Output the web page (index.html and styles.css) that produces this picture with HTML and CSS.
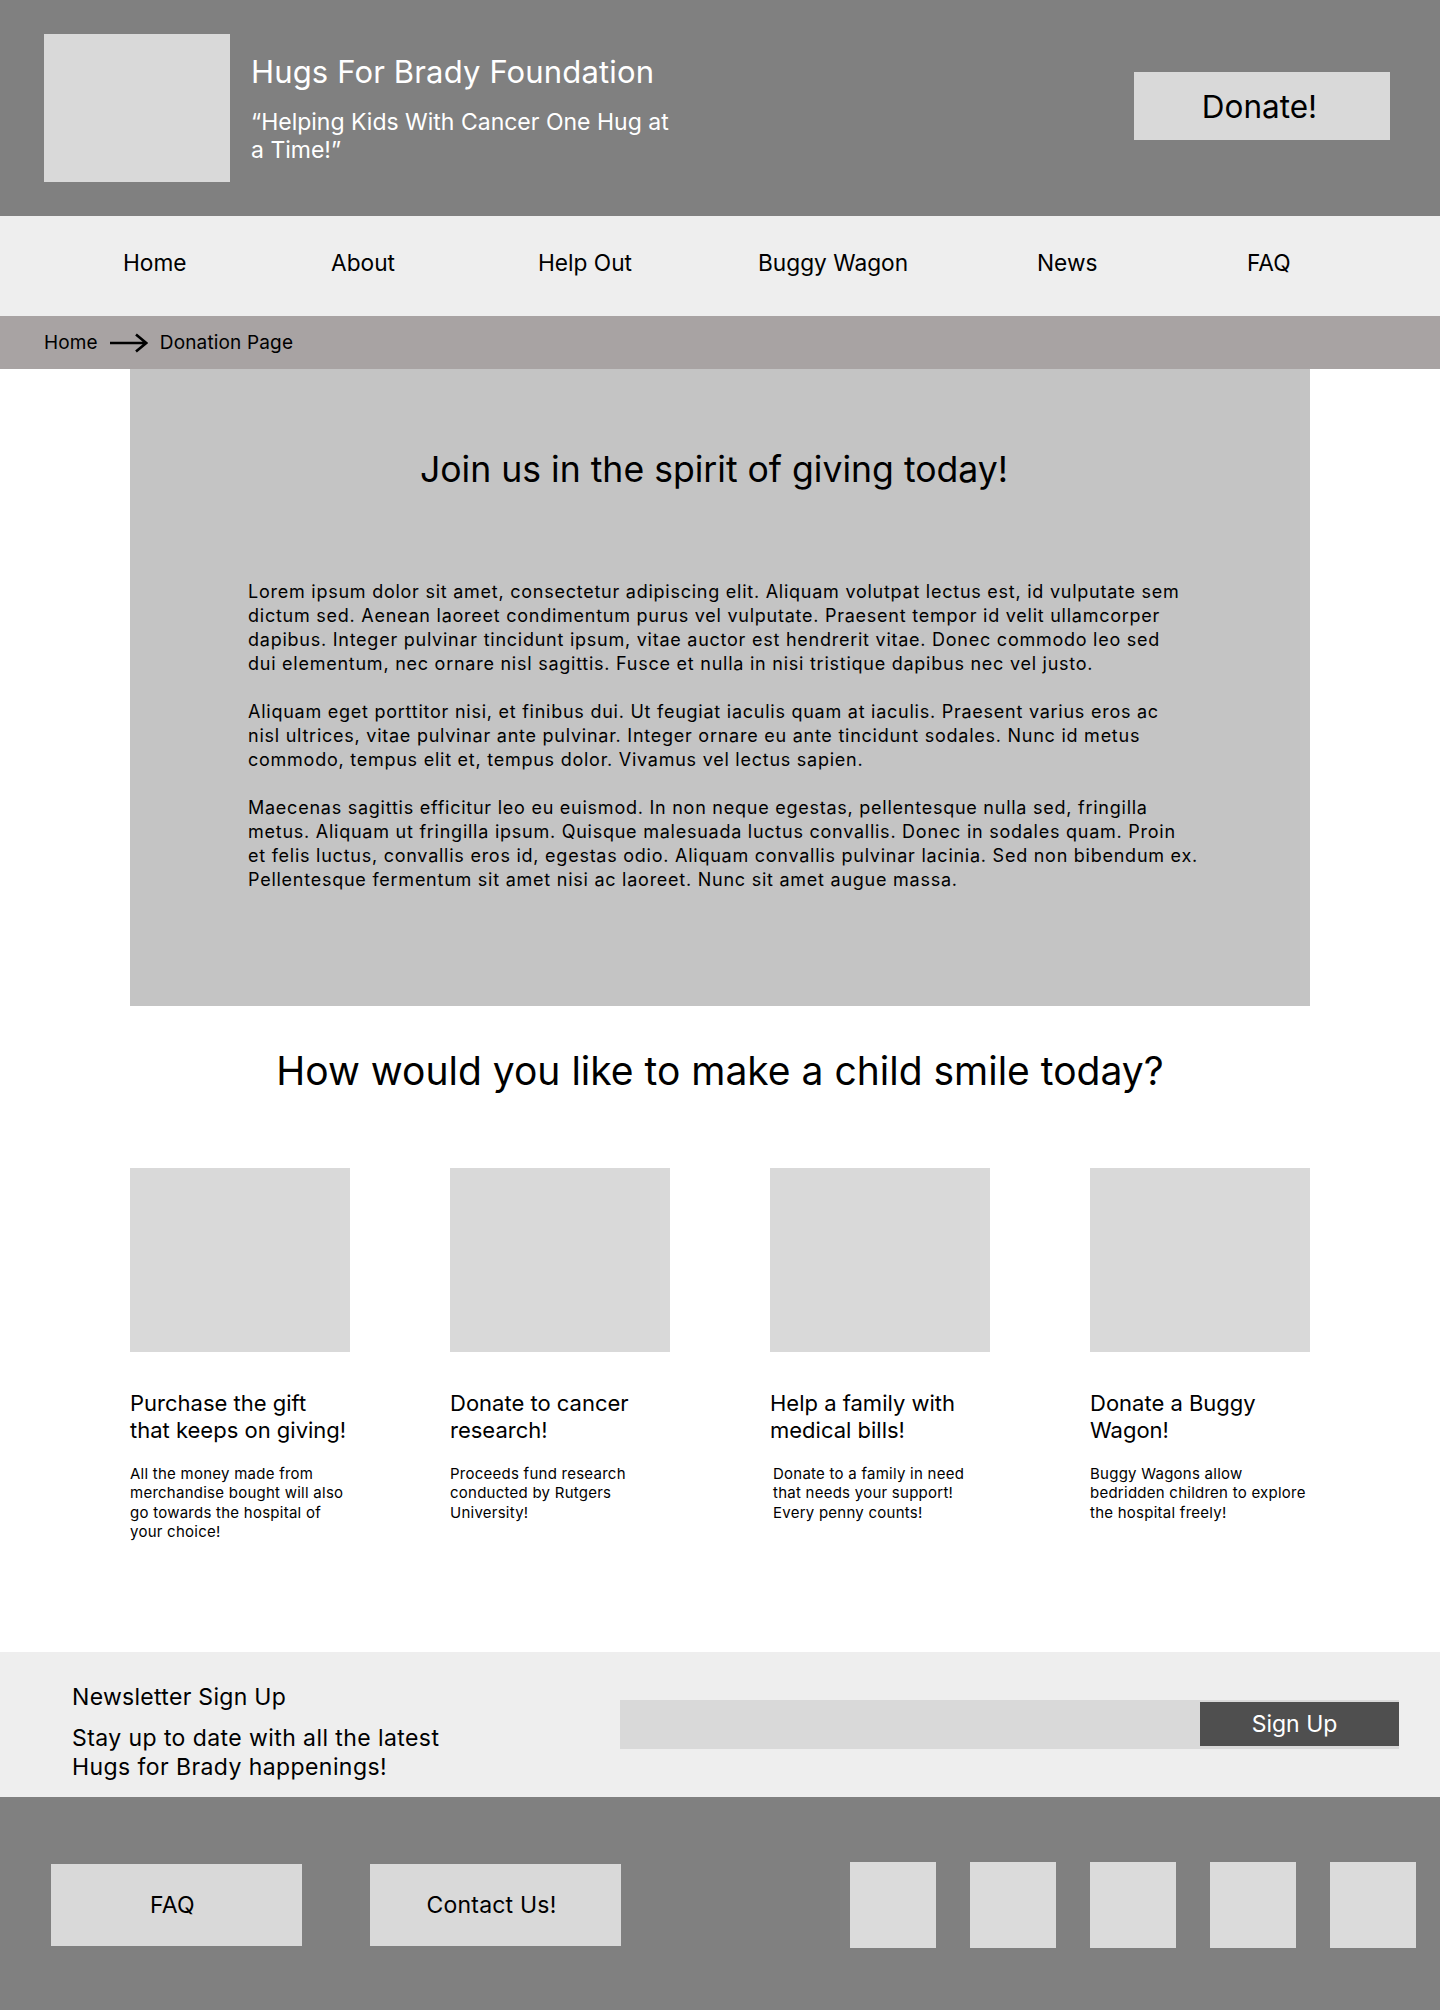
FILE: index.html
```html
<!DOCTYPE html>
<html lang="en">
<head>
<meta charset="utf-8">
<title>Hugs For Brady Foundation - Donation Page</title>
<link rel="stylesheet" href="styles.css">
</head>
<body>
<header class="site-header">
  <div class="logo"></div>
  <div class="brand">
    <h1 class="brand-title">Hugs For Brady Foundation</h1>
    <p class="brand-tagline">“Helping Kids With Cancer One Hug at a Time!”</p>
  </div>
  <a class="donate-btn" href="#">Donate!</a>
</header>

<nav class="main-nav">
  <a href="#">Home</a>
  <a href="#">About</a>
  <a href="#">Help Out</a>
  <a href="#">Buggy Wagon</a>
  <a href="#">News</a>
  <a href="#">FAQ</a>
</nav>

<div class="breadcrumb">
  <a href="#">Home</a>
  <svg class="crumb-arrow" width="38" height="20" viewBox="0 0 38 20" aria-hidden="true"><path d="M0 10H36M26 1.5L36.2 10L26 18.5" fill="none" stroke="#000" stroke-width="2.6" stroke-linejoin="miter"/></svg>
  <span>Donation Page</span>
</div>

<main>
  <section class="intro">
    <h2 class="intro-title">Join us in the spirit of giving today!</h2>
    <p>Lorem ipsum dolor sit amet, consectetur adipiscing elit. Aliquam volutpat lectus est, id vulputate sem<br>dictum sed. Aenean laoreet condimentum purus vel vulputate. Praesent tempor id velit ullamcorper<br>dapibus. Integer pulvinar tincidunt ipsum, vitae auctor est hendrerit vitae. Donec commodo leo sed<br>dui elementum, nec ornare nisl sagittis. Fusce et nulla in nisi tristique dapibus nec vel justo.</p>
    <p>Aliquam eget porttitor nisi, et finibus dui. Ut feugiat iaculis quam at iaculis. Praesent varius eros ac<br>nisl ultrices, vitae pulvinar ante pulvinar. Integer ornare eu ante tincidunt sodales. Nunc id metus<br>commodo, tempus elit et, tempus dolor. Vivamus vel lectus sapien.</p>
    <p>Maecenas sagittis efficitur leo eu euismod. In non neque egestas, pellentesque nulla sed, fringilla<br>metus. Aliquam ut fringilla ipsum. Quisque malesuada luctus convallis. Donec in sodales quam. Proin<br>et felis luctus, convallis eros id, egestas odio. Aliquam convallis pulvinar lacinia. Sed non bibendum ex.<br>Pellentesque fermentum sit amet nisi ac laoreet. Nunc sit amet augue massa.</p>
  </section>

  <section class="ways">
    <h2 class="ways-title">How would you like to make a child smile today?</h2>
    <div class="cards">
      <article class="card">
        <div class="card-img"></div>
        <h3 class="card-title">Purchase the gift<br>that keeps on giving!</h3>
        <p class="card-desc">All the money made from<br>merchandise bought will also<br>go towards the hospital of<br>your choice!</p>
      </article>
      <article class="card">
        <div class="card-img"></div>
        <h3 class="card-title">Donate to cancer<br>research!</h3>
        <p class="card-desc">Proceeds fund research<br>conducted by Rutgers<br>University!</p>
      </article>
      <article class="card">
        <div class="card-img"></div>
        <h3 class="card-title">Help a family with<br>medical bills!</h3>
        <p class="card-desc card-desc-indent">Donate to a family in need<br>that needs your support!<br>Every penny counts!</p>
      </article>
      <article class="card">
        <div class="card-img"></div>
        <h3 class="card-title">Donate a Buggy<br>Wagon!</h3>
        <p class="card-desc">Buggy Wagons allow<br>bedridden children to explore<br>the hospital freely!</p>
      </article>
    </div>
  </section>
</main>

<section class="newsletter">
  <div class="newsletter-text">
    <h2 class="newsletter-title">Newsletter Sign Up</h2>
    <p class="newsletter-sub">Stay up to date with all the latest<br>Hugs for Brady happenings!</p>
  </div>
  <form class="signup" onsubmit="return false">
    <button class="signup-btn" type="submit">Sign Up</button>
  </form>
</section>

<footer class="site-footer">
  <a class="footer-link" href="#">FAQ</a>
  <a class="footer-link" href="#">Contact Us!</a>
  <div class="socials">
    <span class="social"></span>
    <span class="social"></span>
    <span class="social"></span>
    <span class="social"></span>
    <span class="social"></span>
  </div>
</footer>
</body>
</html>
```
FILE: styles.css
```css
* { box-sizing: border-box; }

body {
  margin: 0;
  font-family: Inter, "Noto Sans", sans-serif;
  color: #000;
  background: #fff;
}

a { color: inherit; text-decoration: none; }

/* Header */
.site-header {
  height: 216px;
  background: #808080;
  display: flex;
  align-items: flex-start;
  padding: 34px 50px 0 44px;
}
.logo {
  width: 186px;
  height: 148px;
  background: #d9d9d9;
  flex: none;
}
.brand {
  margin: 19px 0 0 21px;
  color: #fff;
  width: 425px;
}
.brand-title {
  margin: 0;
  font-size: 31px;
  line-height: 38px;
  font-weight: 400;
  letter-spacing: 0.15px;
}
.brand-tagline {
  margin: 17px 0 0;
  font-size: 23px;
  line-height: 28px;
  letter-spacing: 0;
}
.donate-btn {
  margin: 38px 0 0 auto;
  width: 256px;
  height: 68px;
  background: #d9d9d9;
  display: flex;
  align-items: center;
  justify-content: center;
  padding-right: 5px;
  font-size: 31.5px;
}

/* Navigation */
.main-nav {
  height: 100px;
  background: #eeeeee;
  display: grid;
  grid-template-columns: 208px 207px 220px 279px 210px auto;
  align-items: center;
  padding: 0 0 8px 123px;
  font-size: 22.7px;
}

/* Breadcrumb */
.breadcrumb {
  height: 53px;
  background: #a8a3a3;
  display: flex;
  align-items: center;
  gap: 12px;
  padding-left: 44px;
  font-size: 19px;
  letter-spacing: 0.15px;
}
.crumb-arrow { display: block; }

/* Intro */
.intro {
  width: 1180px;
  margin: 0 auto;
  background: #c4c4c4;
  padding: 81px 100px 114px 118px;
}
.intro-title {
  margin: 0 30px 90px 0;
  font-size: 35.6px;
  line-height: 40px;
  font-weight: 400;
  text-align: center;
}
.intro p {
  margin: 0 0 24px;
  font-size: 18px;
  line-height: 24px;
  letter-spacing: 0.75px;
}
.intro p:last-child { margin-bottom: 0; }

/* Ways to give */
.ways {
  width: 1180px;
  margin: 0 auto;
  padding: 41px 0 111px;
}
.ways-title {
  margin: 0 0 73px;
  font-size: 39px;
  line-height: 48px;
  font-weight: 400;
  text-align: center;
}
.cards {
  display: grid;
  grid-template-columns: repeat(4, 220px);
  justify-content: space-between;
}
.card-img {
  height: 184px;
  background: #d9d9d9;
}
.card-title {
  margin: 38px 0 0;
  font-size: 22px;
  line-height: 27px;
  font-weight: 400;
}
.card-desc {
  margin: 20px 0 0;
  font-size: 15px;
  line-height: 19.3px;
  letter-spacing: 0.25px;
  white-space: nowrap;
}
.card-desc-indent { padding-left: 3px; }

/* Newsletter */
.newsletter {
  height: 145px;
  background: #eeeeee;
  display: flex;
  justify-content: space-between;
  align-items: flex-start;
  padding: 0 41px 0 72px;
}
.newsletter-text { padding-top: 31px; }
.newsletter-title {
  margin: 0;
  font-size: 23px;
  line-height: 28px;
  font-weight: 400;
  letter-spacing: 0.3px;
}
.newsletter-sub {
  margin: 13px 0 0;
  font-size: 23px;
  line-height: 29px;
  letter-spacing: 0.42px;
}
.signup {
  margin: 48px 0 0;
  width: 779px;
  height: 49px;
  background: #d9d9d9;
  display: flex;
  justify-content: flex-end;
  align-items: center;
}
.signup-btn {
  width: 199px;
  height: 44px;
  border: 0;
  padding: 0 10px 0 0;
  background: #4f4f4f;
  color: #fff;
  font: inherit;
  font-size: 23px;
  margin-top: -1px;
}

/* Footer */
.site-footer {
  height: 213px;
  background: #808080;
  display: flex;
  align-items: center;
  padding: 3px 24px 0 51px;
  gap: 68px;
}
.footer-link {
  width: 251px;
  height: 82px;
  background: #d9d9d9;
  display: flex;
  align-items: center;
  justify-content: center;
  padding-right: 8px;
  font-size: 23px;
  letter-spacing: 0.2px;
}
.socials {
  margin-left: auto;
  display: flex;
  gap: 34px;
}
.social {
  width: 86px;
  height: 86px;
  background: #dbdbdb;
}
```
